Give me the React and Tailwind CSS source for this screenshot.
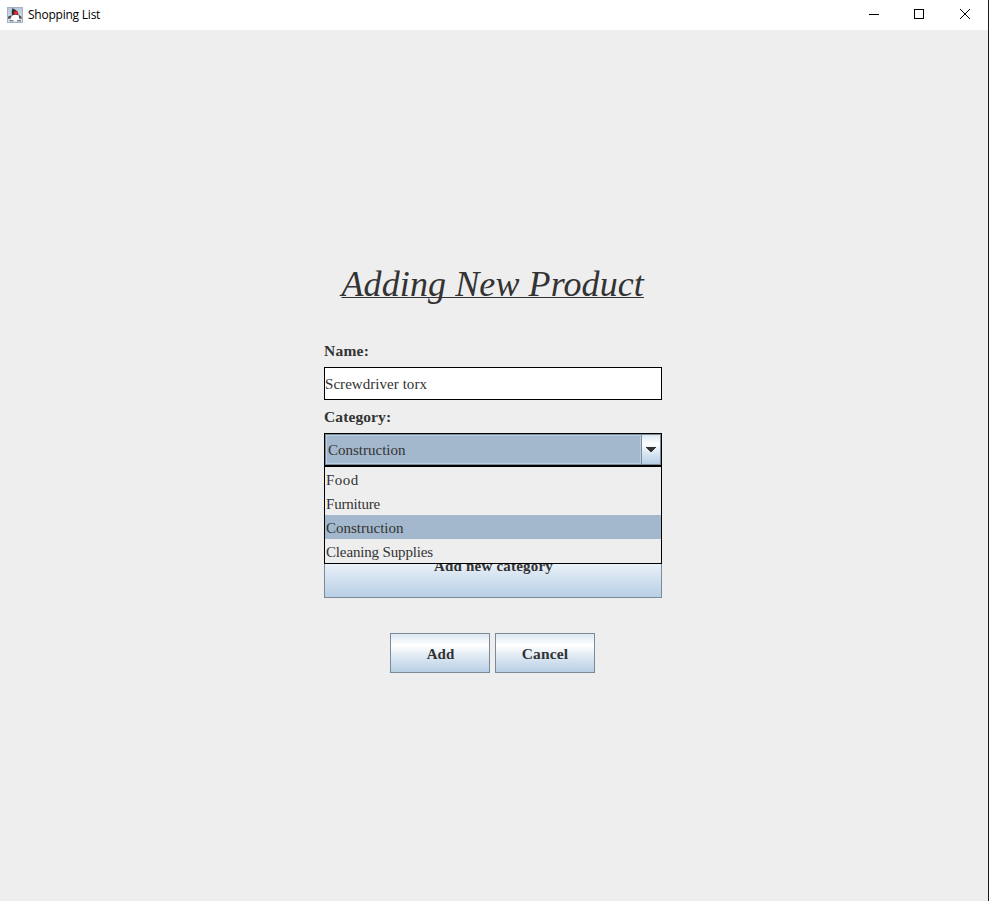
const categories = [
  { name: "Food", spacing: "tracking-[0.5px]" },
  { name: "Furniture", spacing: "tracking-[-0.2px]" },
  { name: "Construction", spacing: "" },
  { name: "Cleaning Supplies", spacing: "tracking-[-0.15px]" },
];

function DukeIcon() {
  return (
    <svg width="16" height="16" viewBox="0 0 16 16" className="block">
      <defs>
        <linearGradient id="tile" x1="0" y1="0" x2="0" y2="1">
          <stop offset="0" stopColor="#b4c8dc" />
          <stop offset="1" stopColor="#dfe8f0" />
        </linearGradient>
      </defs>
      <rect x="0.5" y="0.5" width="15" height="15" fill="url(#tile)" stroke="#a3b3c2" />
      <path d="M5 7.5 L11.5 7.5 L12.3 13 L10 13.4 L8 14.3 L6 13.4 L3.7 13.4 Z" fill="#fff" />
      <path d="M5.3 1.2 L8 2.6 L10.8 4.8 L11.6 8.2 L8.5 7.6 L5 8.6 L4.6 5 Z" fill="#333" />
      <path d="M4.8 8 L1.2 9.6 L1 12 L3.8 11.2 Z M11.7 7.8 L14.3 9.4 L14.8 11.8 L12.2 11.4 Z" fill="#4d4d4d" />
      <path d="M2.5 13.8 H6.5 M10 13.8 H14" stroke="#555" strokeWidth="1" />
      <ellipse cx="9" cy="5.8" rx="2.1" ry="1.9" fill="#e8262a" />
    </svg>
  );
}

function TitleBar() {
  return (
    <header className="flex h-[30px] items-center bg-white pl-[7px]">
      <DukeIcon />
      <span className="ml-[5px] text-[12px] leading-[16px] tracking-[-0.23px] text-black [font-family:'Open_Sans',sans-serif]">
        Shopping List
      </span>
      <div className="ml-auto flex h-full items-center">
        <svg width="138" height="30" viewBox="0 0 138 30" className="block" fill="none" stroke="#000">
          <path d="M19 14.5 H29" />
          <rect x="64.5" y="9.5" width="9" height="9" />
          <path d="M110 9 L120 19 M120 9 L110 19" />
        </svg>
      </div>
    </header>
  );
}

const metal =
  "bg-[linear-gradient(to_bottom,#dde8f3_0%,#ffffff_30%,#dde8f3_60%,#b8cfe5_100%)]";
const buttonLook = `border border-[#7a8a99] font-bold text-[#333333] ${metal}`;

export default function App() {
  return (
    <div className="h-[901px] w-[989px] overflow-hidden border-r border-[#1b1b1b] bg-[#eeeeee] text-[#333333] [font-family:'Liberation_Serif',serif]">
      <TitleBar />
      <main className="flex flex-col items-center pt-[233px]">
        <h1 className="-ml-[2px] h-[42px] w-[303px] whitespace-nowrap text-[36px] italic leading-[42px] tracking-[0.1px] underline decoration-1 underline-offset-[1px] [text-decoration-skip-ink:none]">
          Adding New Product
        </h1>
        <section className="-ml-[2px] mt-[29px] w-[338px]">
          <label className="flex h-[33px] items-center pt-[1px] text-[15.5px] font-bold tracking-[0.25px]">Name:</label>
          <div className="flex h-[33px] items-center border border-black bg-white pt-[2px] text-[15px] tracking-[0.05px]">
            Screwdriver torx
          </div>
          <label className="flex h-[33px] items-center pt-[1px] text-[15.5px] font-bold tracking-[0.1px]">Category:</label>
          <div className="relative">
            <div className="flex h-[33px] border border-black">
              <div className="flex flex-1 items-center border border-[#7a8a99] bg-[#a3b8cc] text-[15px]">
                <div className="flex h-full w-full items-center border border-[#b8cfe5] pl-[1px] pt-[2px]">Construction</div>
              </div>
              <div className={`flex w-[19px] items-center justify-center border-y border-r border-[#7a8a99] ${metal}`}>
                <svg width="11" height="6" viewBox="0 0 11 6" className="-ml-px" shapeRendering="crispEdges">
                  <path d="M0 0 H11 L5.5 5.5 Z" fill="#333" />
                </svg>
              </div>
            </div>
            <ul className="absolute left-0 top-[33px] w-[338px] border border-black bg-[#eeeeee] text-[15px]">
              {categories.map(({ name, spacing }) => (
                <li
                  key={name}
                  className={`flex h-[24px] items-center pl-[1px] pt-[2px] ${spacing} ${name === "Construction" ? "bg-[#a3b8cc]" : ""}`}
                >
                  {name}
                </li>
              ))}
            </ul>
          </div>
          <button className={`mt-[67px] block h-[65px] w-full pl-[1px] pt-[2px] text-[15px] tracking-[0.2px] ${buttonLook}`}>
            Add new category
          </button>
        </section>
        <div className="-ml-[3px] mt-[35px] flex gap-[5px] text-[15px]">
          <button className={`h-[40px] w-[100px] pl-[1px] pt-[2px] ${buttonLook}`}>Add</button>
          <button className={`h-[40px] w-[100px] pt-[2px] text-[15.5px] tracking-[0.15px] ${buttonLook}`}>Cancel</button>
        </div>
      </main>
    </div>
  );
}
